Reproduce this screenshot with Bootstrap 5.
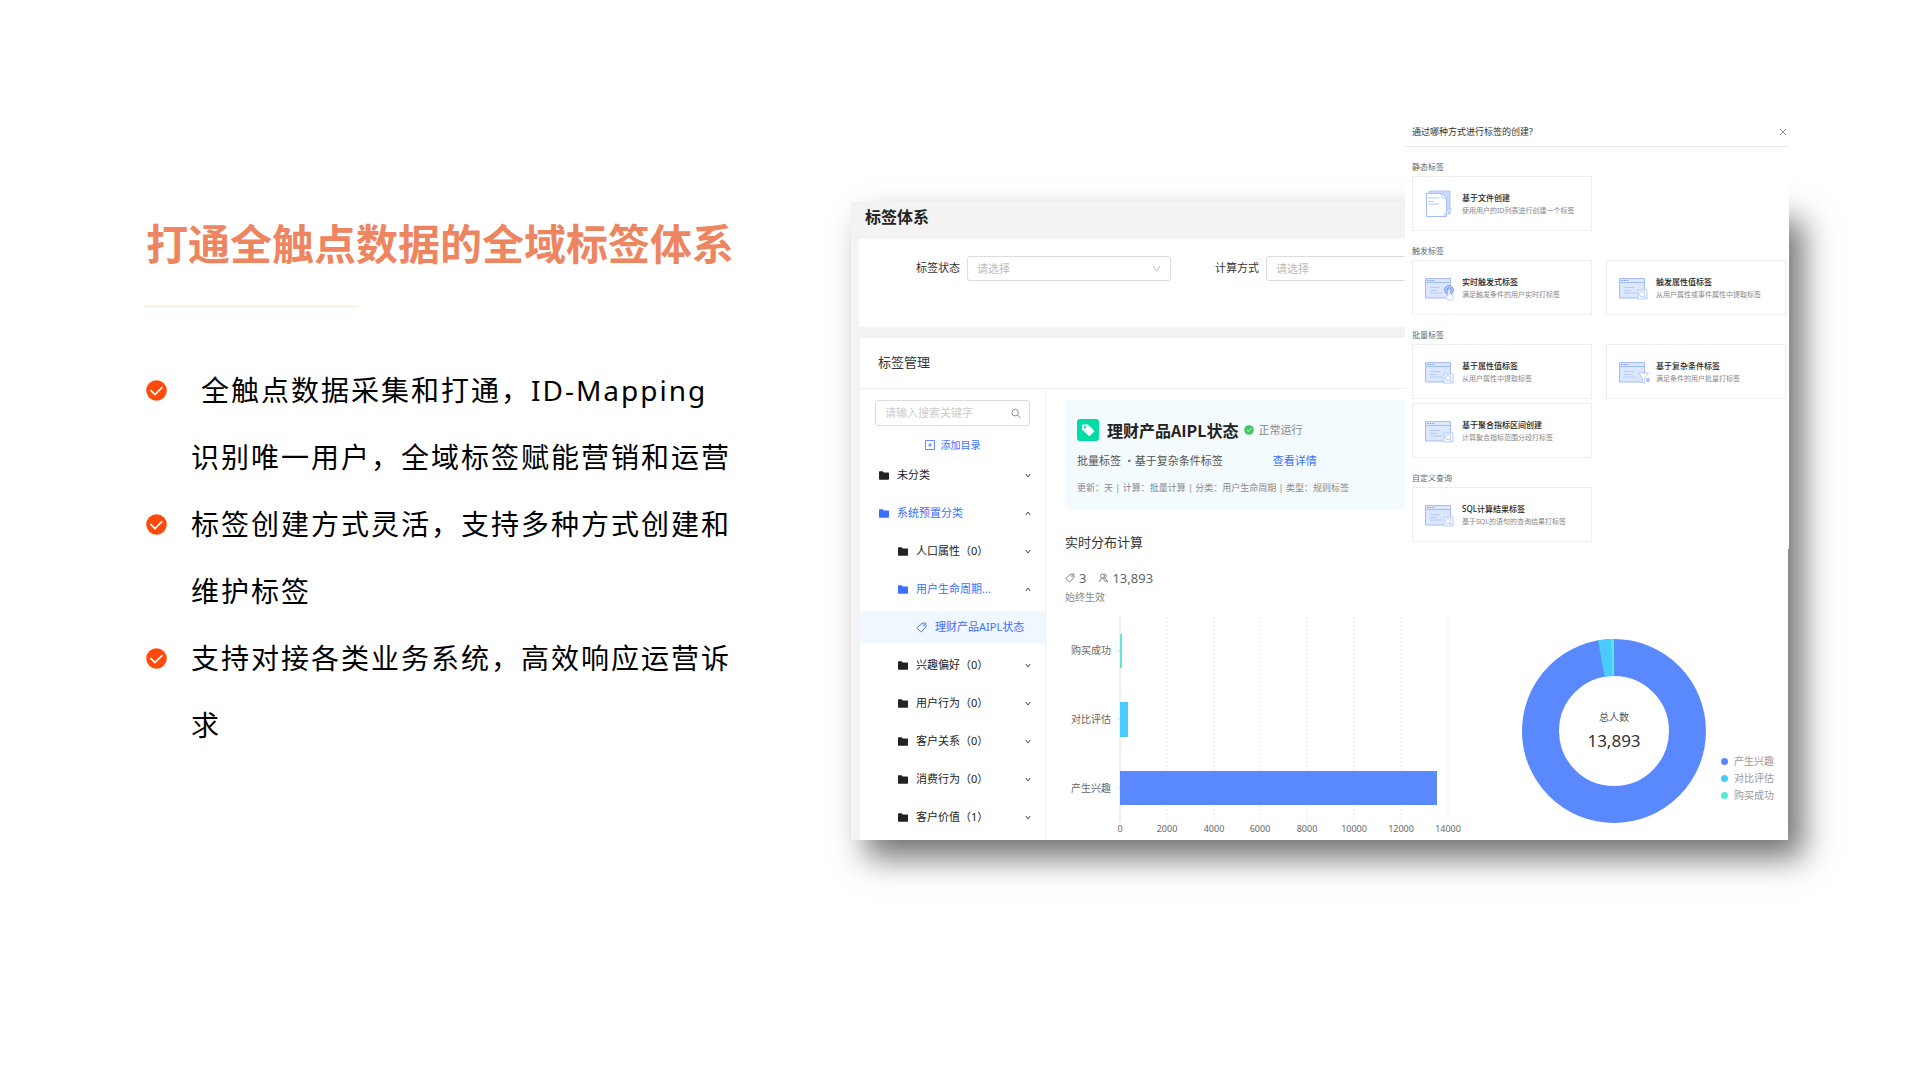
<!DOCTYPE html>
<html lang="zh-CN">
<head>
<meta charset="utf-8">
<meta name="viewport" content="width=device-width, initial-scale=1">
<title>打通全触点数据的全域标签体系</title>
<link href="https://cdn.jsdelivr.net/npm/bootstrap@5.3.0/dist/css/bootstrap.min.css" rel="stylesheet">
<style>
body{font-family:"Noto Sans","Noto Sans CJK SC",sans-serif;background:#fff;color:#000}
button{font-family:inherit}
.slide{padding:202px 132px 60px 144px;gap:112px}
.intro{flex:0 1 595px;padding-top:12px}
.headline{font-size:42px;line-height:60px;font-weight:700;color:#ed8660;padding-left:2px}
.rule{width:214px;height:1px;background:#f8e3d9;margin:32px 0 50px}
.points{font-size:28px;line-height:67px;letter-spacing:2px}
.points li{display:flex;gap:24px;padding-left:2px}
.points svg{flex:none;width:21px;height:21px;margin-top:23px}
.points .first-line{padding-left:10px;display:block}
.shot{flex:1 1 0;min-width:0}
.board{background:#f3f3f3;padding-left:8px;box-shadow:15px 18px 30px rgba(0,0,0,.55)}
.board-title{font-size:16px;line-height:30px;font-weight:700;color:#222;padding:0 0 7px 6px}
.panel{background:#fff;border-radius:2px 0 0 2px}
.filters{height:88px;padding:17px 0 0 57px;gap:44px;overflow:hidden;font-size:11px;color:#333}
.filters label{white-space:nowrap}
.filters .form-select{width:204px;height:25px;padding:0 28px 0 9px;font-size:11px;line-height:23px;color:#bbb;border-color:#ddd;border-radius:3px;background-image:url("data:image/svg+xml,%3Csvg xmlns='http://www.w3.org/2000/svg' viewBox='0 0 10 10'%3E%3Cpath d='M1 2l4 6 4-6' fill='none' stroke='%23bbb'/%3E%3C/svg%3E");background-size:9px 9px;background-position:right 9px center}
.panel-head{font-size:13px;line-height:48px;padding-bottom:2px;color:#333;padding-left:18px;border-bottom:1px solid #eee}
.tree{width:186px;flex:none;border-right:1px solid #eee;padding:11px 0 4px;font-size:11px}
.search{height:26px;margin:0 15px;border:1px solid #ddd;border-radius:3px;padding:0 8px 0 9px}
.search input{border:0;outline:0;width:100%;min-width:0;font-size:11px;padding:0;background:none}
.search input::placeholder{color:#ccc}
.add{height:22px;margin-top:8px;font-size:10px;gap:6px;padding:0;color:#3d70ff}
.node{width:100%;height:38px;border:0;background:none;padding:0 14px 0 19px;gap:8px;color:#222;text-align:left}
.node.deep{padding-left:38px}
.node.leaf{padding-left:56px;padding-right:0;gap:8px;height:32px;margin:3px 0;background:#f0f7ff;white-space:nowrap}
.node.on{color:#3d70ff}
.node .fold{width:10px;height:9px;fill:currentColor;flex:none}
.node .arw{width:6px;height:5px;stroke:#444;fill:none;margin-left:auto}
.detail{padding:11px 0 0 19px;min-width:0}
.info{background:#f3fbff;padding:18px 0 12px 12px;font-size:11px;color:#555}
.info-title{height:24px}
.info-title strong{font-family:"Noto Sans CJK SC",sans-serif;font-size:16px;color:#222;margin-left:8px}
.info-title .ok{margin-left:6px}
.info-line{line-height:22px;margin-top:8px}
.info-line a{margin-left:50px;color:#3d70ff;text-decoration:none}
.meta{font-size:9px;line-height:20px;margin-top:6px;color:#888;white-space:pre}
.soft{color:#888}
.sub{font-size:13px;line-height:24px;margin:20px 0 0;color:#333;font-weight:400}
.stats{font-size:13px;line-height:20px;margin-top:14px;color:#666}
.stats .crowd{margin-left:13px}
.effect{font-size:10px;line-height:18px;color:#888}
.bars{width:395px;height:230px;flex:none;overflow:visible}
.bars text{font-size:9px;fill:#666}
.bars .cat text{font-size:10px}
.ring{width:184px;height:184px;margin:33px 0 0 62px;flex:none}
.legend{font-size:10px;line-height:17px;color:#999;margin:147px 0 0 15px;white-space:nowrap}
.legend i{width:7px;height:7px;border-radius:50%;margin-right:6px}
.drawer{position:absolute;top:-92px;right:-1px;width:384px;background:#fff;padding-bottom:7px}
.drawer-head{height:37px;padding:8px 2px 0 7px;border-bottom:1px solid #eaeaea;font-size:9px;color:#333}
.drawer-head button{border:0;background:none;padding:0;width:8px;height:8px;display:flex}
.kind{padding:14px 3px 0 7px}
.kind h3{font-size:8px;line-height:12px;margin:0 0 3px;color:#666;font-weight:400}
.kinds{display:grid;grid-template-columns:1fr 1fr;gap:4px 14px}
.option{height:55px;border:1px solid #eee;background:#fff;padding:0 0 0 7px;gap:4px;text-align:left;white-space:nowrap}
.option svg{width:38px;height:38px;flex:none}
.option b{display:block;font-size:8px;line-height:13px;font-weight:500;color:#222}
.option small{display:block;font-size:7px;line-height:13px;color:#888}
@media(max-width:1400px){.slide{flex-direction:column;padding:60px 40px;gap:140px}.intro,.shot{flex:none;width:100%}}
</style>
</head>
<body>
<svg class="d-none" aria-hidden="true">
  <symbol id="folder" viewBox="0 0 10 9"><path d="M0 1Q0 .3.7.3H3.6L4.8 1.6H9.3Q10 1.6 10 2.3V8Q10 8.7 9.3 8.7H.7Q0 8.7 0 8Z"/></symbol>
  <symbol id="down" viewBox="0 0 6 5"><path d="M.8 1L3 4 5.2 1"/></symbol>
  <symbol id="up" viewBox="0 0 6 5"><path d="M.8 4L3 1 5.2 4"/></symbol>
  <symbol id="check" viewBox="0 0 21 21"><circle cx="10.500" cy="10.500" r="10.300" fill="#ff4a0a"/><path d="M4.500 10.200L9 14.600 16.500 7" fill="none" stroke="#fff" stroke-width="1.700"/></symbol>
  <symbol id="tag" viewBox="0 0 12 12"><path d="M6.500 1.500L10.500 1 11 5 6 10.500Q5.500 11 5 10.500L1.300 7Q.8 6.500 1.300 6Z" fill="none" stroke="currentColor"/><circle cx="8.600" cy="3.600" r=".9" fill="none" stroke="currentColor" stroke-width=".7"/></symbol>
  <symbol id="win" viewBox="0 0 38 38"><path d="M5.500 9.500H30.500V29H5.500Z" fill="#dbe6ff" stroke="#a3bcfa"/><path d="M5.500 13.500H30.500" stroke="#a3bcfa"/><path d="M7 11.500H14" stroke="#7596ef" stroke-dasharray="1.500 1.200"/><path d="M10 18.500H20M10 21.500H17M10 24H22" stroke="#b7cafa"/></symbol>
  <symbol id="look" viewBox="0 0 38 38"><use href="#win"/><path d="M24 21H33V30H24Z" fill="#fff" stroke="#b4c9fc"/><circle cx="28.200" cy="25.200" r="2.700" fill="none" stroke="#a3bcfa" stroke-width=".8"/><path d="M30 27.300L31.600 29" stroke="#a3bcfa"/></symbol>
  <symbol id="touch" viewBox="0 0 38 38"><use href="#win"/><circle cx="29" cy="21" r="4.300" fill="#c2d3ff" stroke="#6c90ee"/><circle cx="29" cy="21" r="2.200" fill="none" stroke="#6c90ee"/><path d="M28 21Q29 20 30 21V25L33 26V29L32 31H28L25.500 27.500 26.500 26.500 28 27.500Z" fill="#fff" stroke="#a3bcfa" stroke-width=".7"/></symbol>
  <symbol id="funnel" viewBox="0 0 38 38"><use href="#win"/><path d="M24.500 20H34.500L30.700 25V30.500L28.300 29V25Z" fill="#fff" stroke="#a3bcfa" stroke-width=".8"/><path d="M32.500 25.800H35.500M32.500 27.800H35.500" stroke="#6c90ee" stroke-width="1.200"/></symbol>
  <symbol id="doc" viewBox="0 0 38 38"><path d="M9 6H30V29H9Z" fill="#c9d9ff" stroke="#a3bcfa" stroke-width=".8"/><path d="M6.500 8.500H22L26.500 13V31.500H6.500Z" fill="#fff" stroke="#a3bcfa"/><path d="M22 8.500V13H26.500M8 13H19M8 16.500H14M8 19H19" fill="none" stroke="#b4c9fc"/><path d="M25 28L30 22.500 31.500 24 27 30 24.500 30.500Z" fill="#dbe6ff" stroke="#a3bcfa" stroke-width=".7"/></symbol>
</svg>

<main class="slide d-flex align-items-start">
  <section class="intro">
    <h1 class="headline mb-0">打通全触点数据的全域标签体系</h1>
    <div class="rule"></div>
    <ul class="points list-unstyled mb-0">
      <li><svg><use href="#check"/></svg><span><span class="first-line">全触点数据采集和打通，ID-Mapping</span>识别唯一用户，全域标签赋能营销和运营</span></li>
      <li><svg><use href="#check"/></svg><span>标签创建方式灵活，支持多种方式创建和维护标签</span></li>
      <li><svg><use href="#check"/></svg><span>支持对接各类业务系统，高效响应运营诉求</span></li>
    </ul>
  </section>

  <section class="shot position-relative">
    <div class="board">
      <h2 class="board-title mb-0">标签体系</h2>
      <form class="panel filters d-flex align-items-start">
        <div class="d-flex align-items-center" style="gap:7px"><label for="state">标签状态</label><select id="state" class="form-select"><option>请选择</option></select></div>
        <div class="d-flex align-items-center" style="gap:7px"><label for="calc">计算方式</label><select id="calc" class="form-select"><option>请选择</option></select></div>
      </form>
      <div class="panel" style="margin:11px 0 0 1px">
        <div class="panel-head">标签管理</div>
        <div class="d-flex">
          <nav class="tree">
            <div class="search d-flex align-items-center"><input type="text" aria-label="搜索" placeholder="请输入搜索关键字"><svg width="11" height="11" viewBox="0 0 11 11" fill="none" stroke="#888"><circle cx="4.500" cy="4.500" r="3.600"/><path d="M7.200 7.200L10.500 10.500"/></svg></div>
            <button class="add btn d-flex align-items-center justify-content-center w-100 border-0" type="button"><svg width="10" height="10" viewBox="0 0 10 10" fill="none" stroke="currentColor" stroke-width=".8"><path d="M.5.500H9.500V9.500H.5ZM5 3V7M3 5H7"/></svg>添加目录</button>
            <button class="node d-flex align-items-center" type="button"><svg class="fold"><use href="#folder"/></svg>未分类<svg class="arw"><use href="#down"/></svg></button>
            <button class="node on d-flex align-items-center" type="button"><svg class="fold"><use href="#folder"/></svg>系统预置分类<svg class="arw"><use href="#up"/></svg></button>
            <button class="node deep d-flex align-items-center" type="button"><svg class="fold"><use href="#folder"/></svg>人口属性（0）<svg class="arw"><use href="#down"/></svg></button>
            <button class="node deep on d-flex align-items-center" type="button"><svg class="fold"><use href="#folder"/></svg>用户生命周期...<svg class="arw"><use href="#up"/></svg></button>
            <button class="node leaf on d-flex align-items-center" type="button"><svg width="11" height="11"><use href="#tag"/></svg>理财产品AIPL状态</button>
            <button class="node deep d-flex align-items-center" type="button"><svg class="fold"><use href="#folder"/></svg>兴趣偏好（0）<svg class="arw"><use href="#down"/></svg></button>
            <button class="node deep d-flex align-items-center" type="button"><svg class="fold"><use href="#folder"/></svg>用户行为（0）<svg class="arw"><use href="#down"/></svg></button>
            <button class="node deep d-flex align-items-center" type="button"><svg class="fold"><use href="#folder"/></svg>客户关系（0）<svg class="arw"><use href="#down"/></svg></button>
            <button class="node deep d-flex align-items-center" type="button"><svg class="fold"><use href="#folder"/></svg>消费行为（0）<svg class="arw"><use href="#down"/></svg></button>
            <button class="node deep d-flex align-items-center" type="button"><svg class="fold"><use href="#folder"/></svg>客户价值（1）<svg class="arw"><use href="#down"/></svg></button>
          </nav>
          <div class="detail flex-grow-1">
            <div class="info">
              <div class="info-title d-flex align-items-center">
                <svg width="22" height="22" viewBox="0 0 22 22"><rect width="22" height="22" rx="3" fill="#00dca5"/><path d="M5 6.500Q5 5.500 6 5.500H11L17 11.500Q17.500 12 17 12.700L13 16.700Q12.300 17.200 11.600 16.700L5 10.500Z" fill="#fff"/><circle cx="7.800" cy="8.200" r="1.200" fill="#00dca5"/></svg>
                <strong>理财产品AIPL状态</strong>
                <svg class="ok" width="10" height="10" viewBox="0 0 10 10" fill="none"><circle cx="5" cy="5" r="4.800" fill="#44c565"/><path d="M2.900 5L4.500 6.600 7.200 3.500" stroke="#fff"/></svg>
                <span class="soft ms-1">正常运行</span>
              </div>
              <div class="info-line">批量标签 ・基于复杂条件标签<a href="#">查看详情</a></div>
              <div class="meta">更新：天 | 计算：批量计算 | 分类：用户生命周期 | 类型：规则标签</div>
            </div>
            <h3 class="sub">实时分布计算</h3>
            <div class="stats d-flex align-items-center">
              <svg width="10" height="10"><use href="#tag"/></svg><span class="ms-1">3</span>
              <svg class="crowd" width="9" height="10" viewBox="0 0 9 10" fill="none" stroke="#777" stroke-width=".9"><circle cx="3.500" cy="3" r="2"/><path d="M.5 9Q.8 5.500 3.500 5.500 5 5.500 5.500 7M5.500 1Q7.500 1.200 7.200 3.500 6.800 5 5.500 5 8.200 5.800 8.500 9L5 7.500"/></svg><span class="ms-1">13,893</span>
            </div>
            <div class="effect">始终生效</div>
            <div class="d-flex align-items-start">
              <svg class="bars" viewBox="0 0 395 230">
                <path d="M102 11V216M149 11V216M195 11V216M242 11V216M289 11V216M336 11V216M383 11V216" stroke="#e8e8e8" stroke-dasharray="2 2" fill="none"/>
                <path d="M55 11V216M52 45H55M52 113H55M52 182H55" stroke="#ddd" fill="none"/>
                <rect x="55" y="28" width="2" height="34" fill="#5ce9d5"/>
                <rect x="55" y="96" width="8" height="35" fill="#4acbff"/>
                <rect x="55" y="165" width="317" height="34" fill="#5a88ff"/>
                <g class="cat" text-anchor="end"><text x="46" y="48">购买成功</text><text x="46" y="117">对比评估</text><text x="46" y="186">产生兴趣</text></g>
                <g text-anchor="middle"><text x="55" y="226">0</text><text x="102" y="226">2000</text><text x="149" y="226">4000</text><text x="195" y="226">6000</text><text x="242" y="226">8000</text><text x="289" y="226">10000</text><text x="336" y="226">12000</text><text x="383" y="226">14000</text></g>
              </svg>
              <svg class="ring" viewBox="0 0 184 184">
                <g fill="none" stroke-width="37" transform="rotate(-90 92 92)">
                  <circle cx="92" cy="92" r="73.500" stroke="#5a88ff"/>
                  <circle cx="92" cy="92" r="73.500" stroke="#4acbff" pathLength="360" stroke-dasharray="8 352" stroke-dashoffset="-350"/>
                  <circle cx="92" cy="92" r="73.500" stroke="#51ecd8" pathLength="360" stroke-dasharray="2 358" stroke-dashoffset="-358"/>
                </g>
                <g text-anchor="middle"><text x="92" y="82" font-size="10" fill="#555">总人数</text><text x="92" y="108" font-size="17" fill="#333">13,893</text></g>
              </svg>
              <ul class="legend list-unstyled mb-0">
                <li class="d-flex align-items-center"><i style="background:#5a88ff"></i>产生兴趣</li>
                <li class="d-flex align-items-center"><i style="background:#4acbff"></i>对比评估</li>
                <li class="d-flex align-items-center"><i style="background:#51ecd8"></i>购买成功</li>
              </ul>
            </div>
          </div>
        </div>
      </div>
    </div>

    <aside class="drawer">
      <div class="drawer-head d-flex align-items-center justify-content-between"><span>通过哪种方式进行标签的创建?</span><button type="button" aria-label="关闭"><svg width="8" height="8" viewBox="0 0 8 8" stroke="#888" stroke-width=".9"><path d="M1 1L7 7M7 1L1 7"/></svg></button></div>
      <div class="kind"><h3>静态标签</h3><div class="kinds">
        <button class="option d-flex align-items-center" type="button"><svg><use href="#doc"/></svg><span><b>基于文件创建</b><small>使用用户的ID列表进行创建一个标签</small></span></button>
      </div></div>
      <div class="kind"><h3>触发标签</h3><div class="kinds">
        <button class="option d-flex align-items-center" type="button"><svg><use href="#touch"/></svg><span><b>实时触发式标签</b><small>满足触发条件的用户实时打标签</small></span></button>
        <button class="option d-flex align-items-center" type="button"><svg><use href="#look"/></svg><span><b>触发属性值标签</b><small>从用户属性或事件属性中提取标签</small></span></button>
      </div></div>
      <div class="kind"><h3>批量标签</h3><div class="kinds">
        <button class="option d-flex align-items-center" type="button"><svg><use href="#look"/></svg><span><b>基于属性值标签</b><small>从用户属性中提取标签</small></span></button>
        <button class="option d-flex align-items-center" type="button"><svg><use href="#funnel"/></svg><span><b>基于复杂条件标签</b><small>满足条件的用户批量打标签</small></span></button>
        <button class="option d-flex align-items-center" type="button"><svg><use href="#look"/></svg><span><b>基于聚合指标区间创建</b><small>计算聚合指标范围分段打标签</small></span></button>
      </div></div>
      <div class="kind"><h3>自定义查询</h3><div class="kinds">
        <button class="option d-flex align-items-center" type="button"><svg><use href="#look"/></svg><span><b>SQL计算结果标签</b><small>基于SQL的语句的查询结果打标签</small></span></button>
      </div></div>
    </aside>
  </section>
</main>
<script src="https://cdn.jsdelivr.net/npm/bootstrap@5.3.0/dist/js/bootstrap.bundle.min.js"></script>
</body>
</html>
